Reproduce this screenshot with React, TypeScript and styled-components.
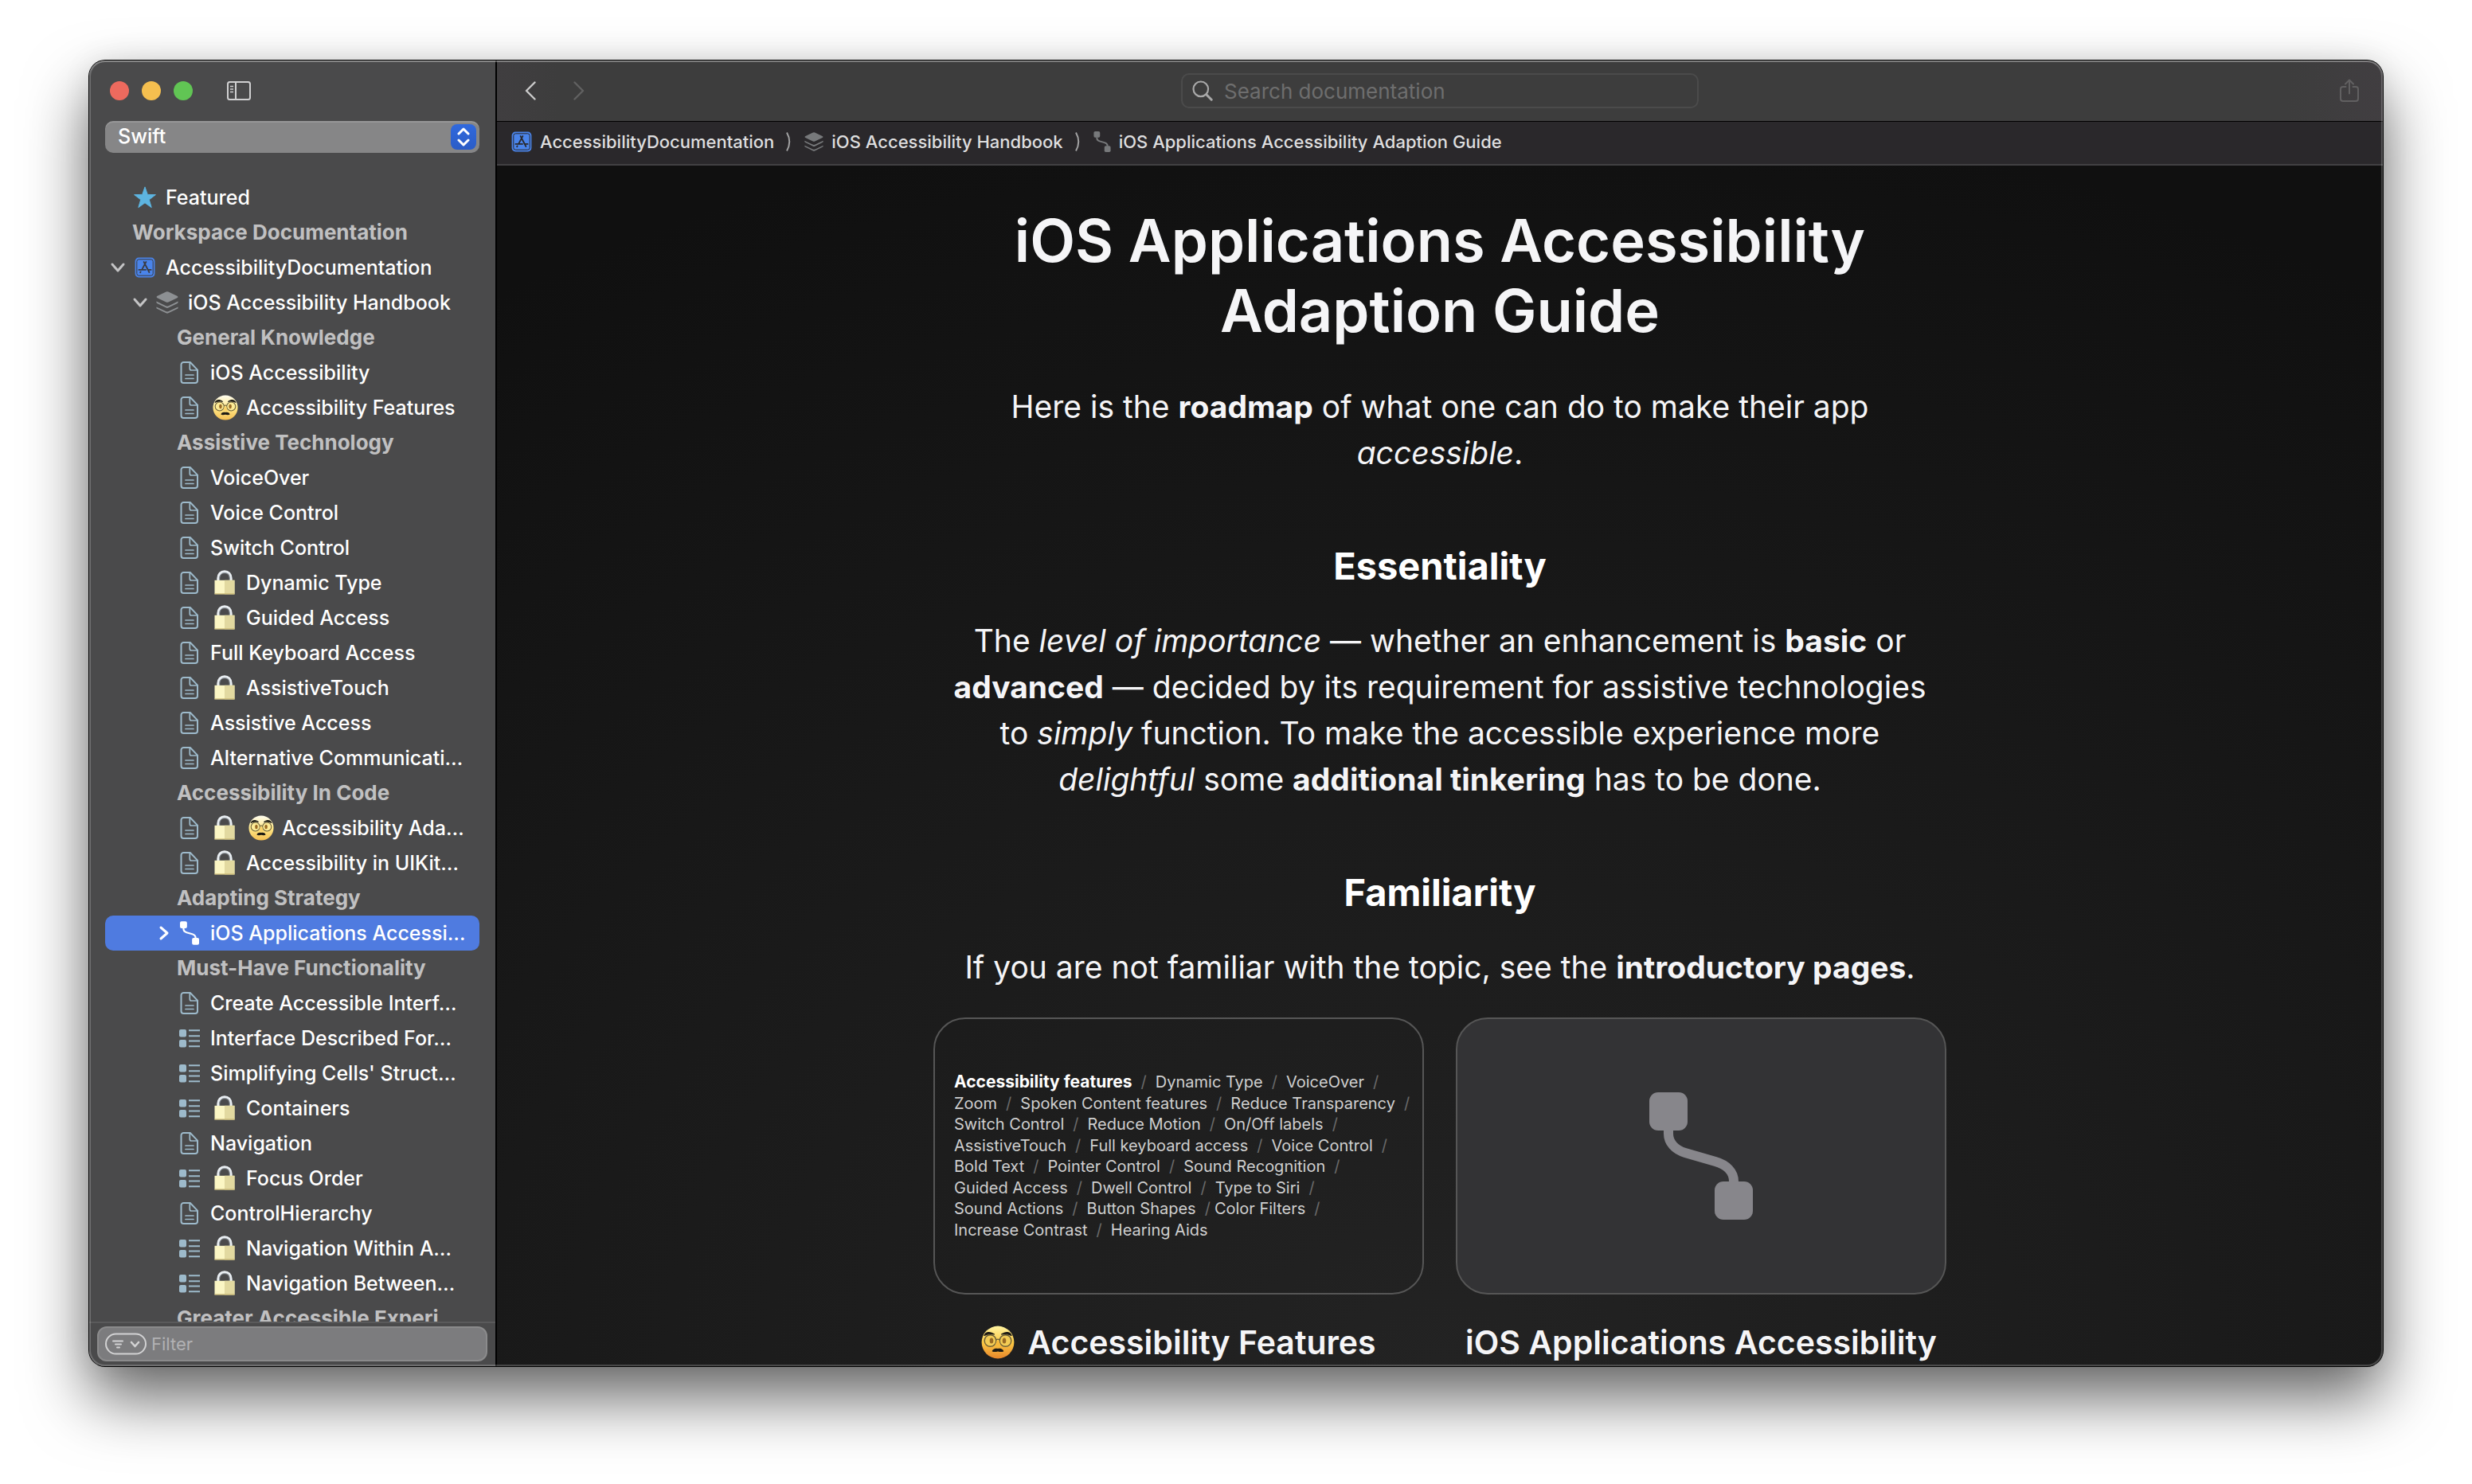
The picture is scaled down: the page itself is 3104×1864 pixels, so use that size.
import React from "react";
import styled, { createGlobalStyle, css } from "styled-components";

const Global = createGlobalStyle`
  *, *::before, *::after { box-sizing: border-box; }
  html, body, #root { height: 100%; }
  body {
    margin: 0;
    background: #ffffff;
    font-family: Inter, "Liberation Sans", sans-serif;
    -webkit-font-smoothing: antialiased;
    overflow: hidden;
  }
  button, input, select { font: inherit; color: inherit; }
`;

/* ---------- window ---------- */

const Desktop = styled.div`
  height: 100vh;
  padding: 76px 112px 148px;
  background: #ffffff;
`;

const Window = styled.div`
  position: relative;
  display: grid;
  grid-template-columns: 512px minmax(0, 1fr);
  height: 100%;
  border-radius: 20px;
  overflow: hidden;
  background: #4a4a4b;

  &::after {
    content: "";
    position: absolute;
    inset: 0;
    border-radius: 20px;
    box-shadow: inset 0 0 0 2px rgba(255, 255, 255, 0.2), inset 0 2px 0 rgba(255, 255, 255, 0.16);
    pointer-events: none;
  }
`;

const Shadow = styled.div`
  height: 100%;
  border-radius: 20px;
  box-shadow: 0 0 0 1px #000000, 0 40px 80px rgba(0, 0, 0, 0.6), 0 0 36px rgba(0, 0, 0, 0.08);
`;

/* ---------- sidebar ---------- */

const Sidebar = styled.aside`
  display: flex;
  flex-direction: column;
  min-height: 0;
  background: #4a4a4b;
  border-right: 2px solid #000000;
`;

const TitleBar = styled.div`
  display: flex;
  align-items: center;
  height: 76px;
  padding-left: 26px;
  gap: 16px;
  flex: none;
`;

const Light = styled.button<{ $color: string }>`
  width: 24px;
  height: 24px;
  padding: 0;
  border: 0;
  border-radius: 50%;
  background: ${(p) => p.$color};
`;

const IconButton = styled.button<{ $color: string }>`
  display: flex;
  align-items: center;
  justify-content: center;
  width: 60px;
  height: 44px;
  padding: 0;
  border: 0;
  background: none;
  color: ${(p) => p.$color};
`;

const SidebarToggle = styled(IconButton)`
  margin-left: 12px;
`;

const LanguageField = styled.div`
  display: grid;
  flex: none;
  margin: 0 20px;
  height: 40px;

  > * { grid-area: 1 / 1; }
`;

const LanguageSelect = styled.select`
  appearance: none;
  width: 100%;
  height: 40px;
  padding: 0 16px 2px;
  border: 0;
  border-radius: 10px;
  background: #868687;
  box-shadow: inset 0 2px 0 rgba(255, 255, 255, 0.14);
  color: #ffffff;
  font-size: 25px;
  font-weight: 500;
`;

const Stepper = styled.span`
  display: flex;
  align-items: center;
  justify-content: center;
  justify-self: end;
  align-self: center;
  width: 32px;
  height: 32px;
  margin-right: 4px;
  border-radius: 8px;
  background: linear-gradient(#3069de, #2b5cc6);
  pointer-events: none;
`;

const Tree = styled.nav`
  flex: 1;
  min-height: 0;
  overflow: hidden;
  padding: 34px 20px 0;
`;

const Row = styled.a<{ $selected?: boolean; $indent: number }>`
  display: flex;
  align-items: center;
  height: 44px;
  padding-left: ${(p) => p.$indent}px;
  border-radius: 10px;
  color: #ffffff;
  font-size: 25px;
  font-weight: 500;
  line-height: 44px;
  white-space: nowrap;
  text-decoration: none;
  ${(p) =>
    p.$selected &&
    css`
      background: #4f7be0;
    `}
`;

const Section = styled.div<{ $indent: number }>`
  height: 44px;
  padding-left: ${(p) => p.$indent}px;
  color: #c0c0c1;
  font-size: 26px;
  font-weight: 700;
  line-height: 44px;
  white-space: nowrap;
`;

const Disclosure = styled.span`
  display: flex;
  width: 30px;
  flex: none;
`;

const RowIcon = styled.span`
  display: flex;
  justify-content: center;
  width: 28px;
  margin-right: 12px;
  flex: none;
`;

const EmojiSlot = styled.span`
  display: flex;
  width: 45px;
  padding-left: 3px;
  flex: none;
`;

const FilterBar = styled.div`
  flex: none;
  padding: 4px 10px 6px;
  border-top: 2px solid #5a5a5b;
`;

const FilterField = styled.label`
  display: flex;
  align-items: center;
  gap: 6px;
  height: 44px;
  padding: 0 8px;
  border: 2px solid #8b8b8c;
  border-radius: 12px;
  background: #7c7c7e;
`;

const FilterInput = styled.input`
  flex: 1;
  min-width: 0;
  padding: 0;
  border: 0;
  outline: 0;
  background: none;
  font-size: 22px;

  &::placeholder { color: #b1b1b3; opacity: 1; }
`;

/* ---------- main pane ---------- */

const Main = styled.main`
  display: flex;
  flex-direction: column;
  min-width: 0;
  min-height: 0;
  background: #141414;
`;

const Toolbar = styled.header`
  display: grid;
  grid-template-columns: 1fr 650px 1fr;
  align-items: center;
  flex: none;
  height: 77px;
  padding: 0 12px;
  border-bottom: 1px solid #000000;
  background: linear-gradient(90deg, #403e40, #3d3d3d 80px, #3d3d3d calc(100% - 120px), #413e41);
`;

const NavButtons = styled.div`
  display: flex;
`;

const SearchField = styled.label`
  display: flex;
  align-items: center;
  gap: 14px;
  height: 44px;
  padding: 0 12px;
  border: 2px solid #4b4b4b;
  border-radius: 10px;
`;

const SearchInput = styled.input`
  flex: 1;
  min-width: 0;
  padding: 0;
  border: 0;
  outline: 0;
  background: none;
  font-size: 26px;

  &::placeholder { color: #6e6e6e; opacity: 1; }
`;

const ToolbarEnd = styled.div`
  display: flex;
  justify-content: flex-end;
`;

const PathBar = styled.nav`
  display: flex;
  align-items: center;
  gap: 14px;
  flex: none;
  height: 55px;
  padding: 0 18px 4px;
  border-bottom: 2px solid #424143;
  background: #2a282b;
`;

const Crumb = styled.a`
  display: flex;
  align-items: center;
  gap: 10px;
  color: #dededf;
  font-size: 22px;
  font-weight: 500;
  line-height: 28px;
  text-decoration: none;
  white-space: nowrap;
`;

const Scroller = styled.div`
  flex: 1;
  min-height: 0;
  overflow: hidden;
  background: radial-gradient(ellipse 2200px 1600px at 50% 100%, #232323, #191919 55%, #101010);
`;

const Article = styled.article`
  width: 1272px;
  max-width: 100%;
  margin: 0 auto;
  padding-top: 50px;
  color: #f5f5f7;
  text-align: center;
`;

const Title = styled.h1`
  margin: 0 0 48px;
  font-size: 74px;
  font-weight: 600;
  line-height: 88px;
`;

const Heading = styled.h2`
  margin: 84px 0 36px;
  color: #ffffff;
  font-size: 47px;
  font-weight: 700;
  line-height: 58px;
`;

const Text = styled.p`
  margin: 0;
  font-size: 39px;
  line-height: 58px;

  strong { font-weight: 700; }
`;

const Line = styled.span`
  display: block;
  white-space: nowrap;
`;

const Cards = styled.div`
  display: grid;
  grid-template-columns: repeat(2, minmax(0, 1fr));
  gap: 40px;
  margin-top: 34px;
`;

const Card = styled.a`
  display: flex;
  flex-direction: column;
  align-items: center;
  gap: 32px;
  color: inherit;
  text-decoration: none;
`;

const Cover = styled.div<{ $filled?: boolean }>`
  display: flex;
  align-items: center;
  justify-content: ${(p) => (p.$filled ? "center" : "flex-start")};
  width: 100%;
  height: 348px;
  padding: 0 24px;
  border: 2px solid #565656;
  border-radius: 40px;
  background: ${(p) => (p.$filled ? "#333335" : "transparent")};
`;

const Features = styled.div`
  display: grid;
  grid-auto-rows: 1fr;
  height: 212px;
  color: #cfcfcf;
  font-size: 20px;
  line-height: 26px;
  text-align: left;
  white-space: nowrap;

  strong { color: #ffffff; font-size: 21px; font-weight: 700; }
`;

const Slash = styled.span<{ $tight?: boolean }>`
  margin: 0 ${(p) => (p.$tight ? 5 : 11)}px 0 11px;
  color: #6a6a6a;
`;

const Caption = styled.div`
  display: flex;
  align-items: center;
  gap: 16px;
  font-size: 41px;
  font-weight: 600;
  line-height: 56px;
  white-space: nowrap;
`;

/* ---------- drawings ---------- */

const Chevron = ({ dir }: { dir: "down" | "right" }) => (
  <svg width="20" height="20" viewBox="0 0 20 20" fill="none" stroke={dir === "down" ? "#c4c4c5" : "#fff"} strokeWidth="3" strokeLinecap="round" strokeLinejoin="round">
    <path d={dir === "down" ? "M3 6l7 8 7-8" : "M8 3l8 7-8 7"} />
  </svg>
);

const Star = () => (
  <svg width="28" height="28" viewBox="0 0 28 28">
    <path fill="#5db4e0" stroke="#5db4e0" strokeWidth="1" strokeLinejoin="round" d="M14 0.8l3.3 9.6 10.1 0.2-8.1 6.2 2.9 9.8L14 20.8l-8.2 5.8 2.9-9.8L0.6 10.6l10.1-0.2z" />
  </svg>
);

const AppIcon = ({ size = 26, ink = "#2a2a2e" }: { size?: number; ink?: string }) => (
  <svg width={size} height={size} viewBox="0 0 26 26" fill="none">
    <rect x="0.6" y="0.6" width="24.8" height="24.8" rx="4.5" fill="#4a84ea" />
    <rect x="2.8" y="2.8" width="20.4" height="20.4" rx="2.6" stroke={ink} strokeWidth="1" />
    <g stroke={ink} strokeWidth="1.8" strokeLinecap="round">
      <path d="M11.6 6l6.8 13M14.4 6L9.2 15.600M7.600 18.400l-0.500 0.900M5.400 15.900h8.600M17.800 15.900h2.800" />
    </g>
  </svg>
);

const Stack = ({ width = 28, color = "#8d9093" }: { width?: number; color?: string }) => (
  <svg width={width} height={width} viewBox="0 0 28 28" fill={color}>
    <path d="M12.6 0.600a3.2 3.2 0 0 1 2.8 0l11 5.200c1.3 0.6 1.3 1.8 0 2.4l-11 5.200a3.2 3.2 0 0 1-2.8 0l-11-5.200c-1.3-0.6-1.3-1.8 0-2.4z" />
    <path d="M0.5 12.6l11.7 5.600c1.2 0.6 2.4 0.6 3.6 0l11.7-5.600c0.4 1.1 0 2.1-1.1 2.7l-11 5.300a3.2 3.2 0 0 1-2.8 0l-11-5.300c-1.1-0.6-1.5-1.6-1.1-2.7z" />
    <path d="M0.5 19.4l11.7 5.600c1.2 0.6 2.4 0.6 3.6 0l11.7-5.600c0.4 1.1 0 2.1-1.1 2.600l-11 5.300a3.2 3.2 0 0 1-2.8 0l-11-5.300c-1.1-0.5-1.5-1.5-1.1-2.600z" />
  </svg>
);

const Doc = () => (
  <svg width="24" height="28" viewBox="0 0 24 28" fill="none" stroke="#9dbacb" strokeWidth="2" strokeLinejoin="round" strokeLinecap="round">
    <path d="M4.5 1h8.3l9.2 9.6v13.4a3 3 0 0 1-3 3H4.500a3 3 0 0 1-3-3V4a3 3 0 0 1 3-3z" />
    <path d="M12.300 1.500v7.500a2 2 0 0 0 2 2h7.200M7 17h10M7 21.500h10" strokeWidth="1.700" />
  </svg>
);

const ListIcon = () => (
  <svg width="28" height="24" viewBox="0 0 28 24" fill="#9dbacb">
    <rect x="1" y="1" width="9" height="9.500" rx="2" />
    <rect x="1" y="14" width="9" height="9.500" rx="2" />
    <path d="M13 1.200h14v2H13zM13 8.300h14v2H13zM13 14.600h14v2H13zM13 21.300h14v2H13z" />
  </svg>
);

const PathIcon = ({ width, height, color }: { width: number; height: number; color: string }) => (
  <svg width={width} height={height} viewBox="0 0 130 160">
    <rect x="0" y="0" width="48" height="48" rx="11" fill={color} />
    <rect x="82" y="112" width="48" height="48" rx="11" fill={color} />
    <path d="M24 46v6c0 11 8 20 21 24l38 11c14 4 23 13 23 25v4" fill="none" stroke={color} strokeWidth="12" />
  </svg>
);

const Lock = () => (
  <svg width="32" height="32" viewBox="0 0 32 32">
    <path d="M6.800 14v-3.400C6.800 5 10.400 1.800 15 1.800s8.200 3.200 8.200 8.800V14" fill="none" stroke="#e9eef2" strokeWidth="3" />
    <path d="M8.700 14v-3.200C8.700 6.200 11.500 3.700 15 3.700s6.300 2.500 6.300 7.100V14" fill="none" stroke="#aab4bd" strokeWidth="0.800" />
    <rect x="2.500" y="12.800" width="25" height="17.600" fill="#fbf6c4" />
    <rect x="15" y="12.800" width="12.500" height="17.600" fill="#e2d9a0" />
    <rect x="2.500" y="29.400" width="25" height="1" fill="#c9b56c" />
  </svg>
);

const Face = ({ size, warm }: { size: number; warm?: boolean }) => {
  const id = warm ? "face-warm" : "face-pale";
  return (
    <svg width={size} height={size} viewBox="0 0 42 42">
      <defs>
        <linearGradient id={id} x1="0" y1="0" x2="0" y2="1">
          <stop offset="0" stopColor={warm ? "#fff3a0" : "#fffdf0"} />
          <stop offset="0.5" stopColor={warm ? "#fbc945" : "#ffe98a"} />
          <stop offset="1" stopColor={warm ? "#e8862a" : "#f6bf52"} />
        </linearGradient>
      </defs>
      <circle cx="21" cy="21" r="20.400" fill={`url(#${id})`} />
      <g fill={warm ? "#f3cc55" : "#fdeb96"} stroke="#6b5f38" strokeWidth="1.400">
        <circle cx="11.500" cy="19" r="7.300" />
        <circle cx="30.500" cy="19" r="7.300" />
      </g>
      <path d="M18.800 18q2.200-1.800 4.400 0" fill="none" stroke="#6b5f38" strokeWidth="1.400" />
      <ellipse cx="13" cy="19" rx="2.300" ry="3.600" fill="#9a6a24" />
      <ellipse cx="29" cy="19" rx="2.300" ry="3.600" fill="#9a6a24" />
      <path d="M19.300 19c0 3-2.800 6-1.300 7.800h6c1.500-1.800-1.300-4.800-1.300-7.800z" fill={warm ? "#f6b93c" : "#fbd46a"} />
      <path d="M4 12.500C5.500 8 11 7 16.500 11c-4.500-1-8.500-.5-12.500 1.500zM38 12.500C36.500 8 31 7 25.500 11c4.500-1 8.500-.5 12.500 1.500z" fill="#1d1a14" stroke="#1d1a14" strokeWidth="1.200" strokeLinejoin="round" />
      <path d="M13.800 32.500c0-2.600 3.500-4.600 7.200-3.600 3.700-1 7.200 1 7.200 3.600-2.500 1-4.800.6-7.200 0-2.400.6-4.700 1-7.200 0z" fill="#1d1a14" />
    </svg>
  );
};

const SidebarIcon = () => (
  <svg width="30" height="24" viewBox="0 0 30 24" fill="none" stroke="currentColor" strokeWidth="2">
    <rect x="1" y="1" width="28" height="22" rx="2.500" />
    <path d="M11 1v22" />
    <path d="M4 6.500h4M4 10h4M4 13.500h4" strokeWidth="1.400" />
  </svg>
);

const Arrow = ({ flip }: { flip?: boolean }) => (
  <svg width="16" height="24" viewBox="0 0 16 24" fill="none" stroke="currentColor" strokeWidth="2.400" strokeLinecap="round" strokeLinejoin="round">
    <path d={flip ? "M3.500 1.500L14 12 3.500 22.500" : "M13.500 1.500L3 12l10.500 10.500"} />
  </svg>
);

const Magnifier = () => (
  <svg width="26" height="26" viewBox="0 0 26 26" fill="none" stroke="#a9a9a9" strokeLinecap="round">
    <circle cx="10.800" cy="10.800" r="9.300" strokeWidth="2.200" />
    <path d="M17.800 17.800l6.400 6.400" strokeWidth="3" />
  </svg>
);

const Share = () => (
  <svg width="24" height="30" viewBox="0 0 24 30" fill="none" stroke="currentColor" strokeWidth="2" strokeLinecap="round" strokeLinejoin="round">
    <path d="M7.500 10H4a3 3 0 0 0-3 3v12a3 3 0 0 0 3 3h16a3 3 0 0 0 3-3V13a3 3 0 0 0-3-3h-3.500" />
    <path d="M12 18.500V2M7 6.500L12 1.500l5 5" />
  </svg>
);

const Separator = () => (
  <svg width="10" height="26" viewBox="0 0 10 26" fill="none" stroke="#a2a2a3" strokeWidth="2" strokeLinejoin="round">
    <path d="M2 1.500q6.500 11.500 0 23" />
  </svg>
);

const FilterPill = () => (
  <svg width="52" height="28" viewBox="0 0 52 28" fill="none" stroke="#d2d2d3" strokeWidth="2" strokeLinecap="round" strokeLinejoin="round">
    <rect x="1" y="1.500" width="50" height="25" rx="12.500" />
    <path d="M10 10.500h12M13 14.500h7M15 18.500h3" />
    <path d="M33 12l4.500 5 4.500-5" strokeWidth="2.600" />
  </svg>
);

const UpDown = () => (
  <svg width="16" height="24" viewBox="0 0 16 24" fill="none" stroke="#fff" strokeWidth="3" strokeLinecap="round" strokeLinejoin="round">
    <path d="M2 8l6-6 6 6M2 16l6 6 6-6" />
  </svg>
);

/* ---------- data ---------- */

type Item = {
  text: string;
  section?: boolean;
  indent: number;
  open?: "down" | "right";
  icon?: "star" | "app" | "stack" | "doc" | "list" | "path";
  emoji?: ("lock" | "face")[];
};

const doc = (text: string, ...emoji: ("lock" | "face")[]): Item => ({ text, indent: 62, icon: "doc", emoji });
const list = (text: string, ...emoji: ("lock" | "face")[]): Item => ({ text, indent: 62, icon: "list", emoji });
const section = (text: string, indent = 90): Item => ({ text, indent, section: true });

const items: Item[] = [
  { text: "Featured", indent: 6, icon: "star" },
  section("Workspace Documentation", 34),
  { text: "AccessibilityDocumentation", indent: 6, icon: "app", open: "down" },
  { text: "iOS Accessibility Handbook", indent: 34, icon: "stack", open: "down" },
  section("General Knowledge"),
  doc("iOS Accessibility"),
  doc("Accessibility Features", "face"),
  section("Assistive Technology"),
  doc("VoiceOver"),
  doc("Voice Control"),
  doc("Switch Control"),
  doc("Dynamic Type", "lock"),
  doc("Guided Access", "lock"),
  doc("Full Keyboard Access"),
  doc("AssistiveTouch", "lock"),
  doc("Assistive Access"),
  doc("Alternative Communicati…"),
  section("Accessibility In Code"),
  doc("Accessibility Ada…", "lock", "face"),
  doc("Accessibility in UIKit…", "lock"),
  section("Adapting Strategy"),
  { text: "iOS Applications Accessi…", indent: 62, icon: "path", open: "right" },
  section("Must-Have Functionality"),
  doc("Create Accessible Interf…"),
  list("Interface Described For…"),
  list("Simplifying Cells' Struct…"),
  list("Containers", "lock"),
  doc("Navigation"),
  list("Focus Order", "lock"),
  doc("ControlHierarchy"),
  list("Navigation Within A…", "lock"),
  list("Navigation Between…", "lock"),
  section("Greater Accessible Experi…"),
];

const icons = {
  star: <Star />,
  app: <AppIcon ink="#3a3c44" />,
  stack: <Stack />,
  doc: <Doc />,
  list: <ListIcon />,
  path: <PathIcon width={24} height={30} color="#ffffff" />,
};

const features: string[][] = [
  ["Accessibility features", "Dynamic Type", "VoiceOver", ""],
  ["Zoom", "Spoken Content features", "Reduce Transparency", ""],
  ["Switch Control", "Reduce Motion", "On/Off labels", ""],
  ["AssistiveTouch", "Full keyboard access", "Voice Control", ""],
  ["Bold Text", "Pointer Control", "Sound Recognition", ""],
  ["Guided Access", "Dwell Control", "Type to Siri", ""],
  ["Sound Actions", "Button Shapes", "Color Filters", ""],
  ["Increase Contrast", "Hearing Aids"],
];

export default function App() {
  return (
    <>
      <Global />
      <Desktop>
        <Shadow>
          <Window>
            <Sidebar>
              <TitleBar>
                <Light $color="#ed6a5e" aria-label="Close" />
                <Light $color="#f5bf4f" aria-label="Minimize" />
                <Light $color="#61c554" aria-label="Zoom" />
                <SidebarToggle $color="#d0d0d1" aria-label="Toggle sidebar">
                  <SidebarIcon />
                </SidebarToggle>
              </TitleBar>
              <LanguageField>
                <LanguageSelect aria-label="Language" defaultValue="Swift">
                  <option>Swift</option>
                </LanguageSelect>
                <Stepper>
                  <UpDown />
                </Stepper>
              </LanguageField>
              <Tree aria-label="Documentation">
                {items.map((item) =>
                  item.section ? (
                    <Section key={item.text} $indent={item.indent}>
                      {item.text}
                    </Section>
                  ) : (
                    <Row key={item.text} href="#" $indent={item.indent} $selected={item.icon === "path"}>
                      <Disclosure>{item.open && <Chevron dir={item.open} />}</Disclosure>
                      <RowIcon>{item.icon && icons[item.icon]}</RowIcon>
                      {item.emoji?.map((e) => (
                        <EmojiSlot key={e}>{e === "lock" ? <Lock /> : <Face size={32} />}</EmojiSlot>
                      ))}
                      {item.text}
                    </Row>
                  )
                )}
              </Tree>
              <FilterBar>
                <FilterField>
                  <FilterPill />
                  <FilterInput placeholder="Filter" aria-label="Filter" />
                </FilterField>
              </FilterBar>
            </Sidebar>
            <Main>
              <Toolbar>
                <NavButtons>
                  <IconButton $color="#cbcbcb" aria-label="Back">
                    <Arrow />
                  </IconButton>
                  <IconButton $color="#616161" aria-label="Forward">
                    <Arrow flip />
                  </IconButton>
                </NavButtons>
                <SearchField>
                  <Magnifier />
                  <SearchInput placeholder="Search documentation" aria-label="Search documentation" />
                </SearchField>
                <ToolbarEnd>
                  <IconButton $color="#616061" aria-label="Share">
                    <Share />
                  </IconButton>
                </ToolbarEnd>
              </Toolbar>
              <PathBar aria-label="Path">
                <Crumb href="#">
                  <AppIcon />
                  AccessibilityDocumentation
                </Crumb>
                <Separator />
                <Crumb href="#">
                  <Stack width={24} color="#77797b" />
                  iOS Accessibility Handbook
                </Crumb>
                <Separator />
                <Crumb href="#">
                  <PathIcon width={22} height={26} color="#77797b" />
                  iOS Applications Accessibility Adaption Guide
                </Crumb>
              </PathBar>
              <Scroller>
                <Article>
                  <Title>
                    <Line>iOS Applications Accessibility</Line>
                    <Line>Adaption Guide</Line>
                  </Title>
                  <Text>
                    <Line>
                      Here is the <strong>roadmap</strong> of what one can do to make their app
                    </Line>
                    <Line>
                      <em>accessible</em>.
                    </Line>
                  </Text>
                  <Heading>Essentiality</Heading>
                  <Text>
                    <Line>
                      The <em>level of importance</em> — whether an enhancement is <strong>basic</strong> or
                    </Line>
                    <Line>
                      <strong>advanced</strong> — decided by its requirement for assistive technologies
                    </Line>
                    <Line>
                      to <em>simply</em> function. To make the accessible experience more
                    </Line>
                    <Line>
                      <em>delightful</em> some <strong>additional tinkering</strong> has to be done.
                    </Line>
                  </Text>
                  <Heading>Familiarity</Heading>
                  <Text>
                    If you are not familiar with the topic, see the <strong>introductory pages</strong>.
                  </Text>
                  <Cards>
                    <Card href="#">
                      <Cover>
                        <Features>
                          {features.map((line, row) => (
                            <div key={line[0]}>
                              {line.map((name, i) => (
                                <React.Fragment key={name}>
                                  {i > 0 && <Slash $tight={name === "Color Filters"}>/</Slash>}
                                  {row === 0 && i === 0 ? <strong>{name}</strong> : name}
                                </React.Fragment>
                              ))}
                            </div>
                          ))}
                        </Features>
                      </Cover>
                      <Caption>
                        <Face size={42} warm />
                        Accessibility Features
                      </Caption>
                    </Card>
                    <Card href="#">
                      <Cover $filled>
                        <PathIcon width={130} height={160} color="#87868b" />
                      </Cover>
                      <Caption>iOS Applications Accessibility</Caption>
                    </Card>
                  </Cards>
                </Article>
              </Scroller>
            </Main>
          </Window>
        </Shadow>
      </Desktop>
    </>
  );
}
